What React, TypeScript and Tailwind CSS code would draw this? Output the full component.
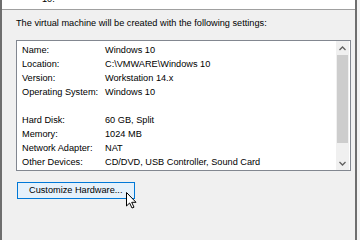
const rows: [string, string][] = [
  ["Name:", "Windows 10"],
  ["Location:", "C:\\VMWARE\\Windows 10"],
  ["Version:", "Workstation 14.x"],
  ["Operating System:", "Windows 10"],
  ["", ""],
  ["Hard Disk:", "60 GB, Split"],
  ["Memory:", "1024 MB"],
  ["Network Adapter:", "NAT"],
  ["Other Devices:", "CD/DVD, USB Controller, Sound Card"],
];

export default function App() {
  return (
    <div
      className="flex h-[240px] w-[360px] overflow-hidden bg-[#f0f0f0] text-[9.2px] text-black"
      style={{ fontFamily: '"Liberation Sans", Arial, sans-serif' }}
    >
      <div className="w-[2px] shrink-0 bg-[#6e6e6e]" />

      <div className="flex w-[353px] shrink-0 flex-col">
        {/* previous list item, scrolled mostly out of view */}
        <div className="h-[9px] shrink-0 overflow-hidden bg-white pl-[40px]">
          <p className="mt-[-6px] leading-[11px]">10.</p>
        </div>
        <div className="h-px shrink-0 bg-[#a0a0a0]" />

        <p className="ml-[14px] mt-[7px] leading-[12px]">
          The virtual machine will be created with the following settings:
        </p>

        <div className="ml-[14px] mt-[11px] flex h-[131px] w-[335px] border border-[#828790] bg-white">
          <div className="flex-1 pl-[5px] pt-[2px]">
            {rows.map(([label, value], i) => (
              <div key={i} className="grid h-[14px] grid-cols-[83px_1fr] items-center leading-[14px]">
                <span>{label}</span>
                <span className="whitespace-nowrap">{value}</span>
              </div>
            ))}
          </div>
          <ScrollBar />
        </div>

        <div className="relative ml-[15px] mt-[11px] w-[118px]">
          <button className="flex h-[17px] w-[118px] items-center border border-[#0078d7] bg-[#e5f1fb] pl-[11px] leading-none">
            Customize Hardware...
          </button>
          <Cursor className="absolute left-[109px] top-[10px]" />
        </div>
      </div>

      <div className="w-[2px] shrink-0 bg-[#6e6e6e]" />
      <div className="flex-1 bg-[#f3f3f3]" />
    </div>
  );
}

function ScrollBar() {
  return (
    <div className="mr-px flex w-[13px] flex-col bg-[#f0f0f0]">
      <div className="flex h-[14px] items-center justify-center">
        <svg width="7" height="5" viewBox="0 0 7 5">
          <path d="M0.5 4 L3.5 1 L6.5 4" fill="none" stroke="#606060" strokeWidth="1.3" />
        </svg>
      </div>
      <div className="mx-px h-[88px] bg-[#cdcdcd]" />
      <div className="flex-1" />
      <div className="flex h-[14px] items-center justify-center">
        <svg width="7" height="5" viewBox="0 0 7 5">
          <path d="M0.5 1 L3.5 4 L6.5 1" fill="none" stroke="#606060" strokeWidth="1.3" />
        </svg>
      </div>
    </div>
  );
}

function Cursor({ className }: { className?: string }) {
  return (
    <svg className={className} width="12" height="17" viewBox="0 0 12 17">
      <path
        d="M0.5 0.5 L0.5 14 L3.6 11 L6 16 L8 15.2 L5.7 10.3 L10 10.3 Z"
        fill="white"
        stroke="black"
        strokeWidth="1"
        strokeLinejoin="miter"
      />
    </svg>
  );
}
